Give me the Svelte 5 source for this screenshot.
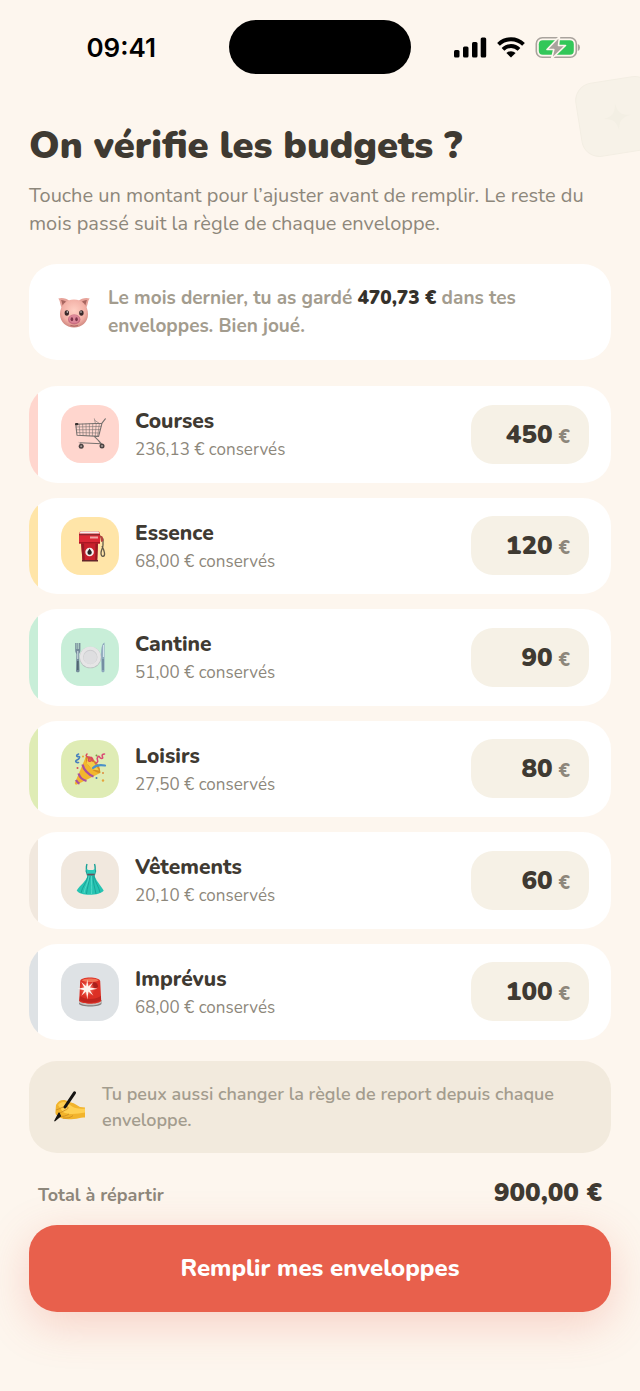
<script>
  const envelopes = [
    { id: "courses", name: "Courses", kept: "236,13", color: "#ffd6ce" },
    { id: "essence", name: "Essence", kept: "68,00", color: "#ffe5a8" },
    { id: "cantine", name: "Cantine", kept: "51,00", color: "#c8eed8" },
    { id: "loisirs", name: "Loisirs", kept: "27,50", color: "#dfecb5" },
    { id: "vetements", name: "Vêtements", kept: "20,10", color: "#f1e8de" },
    { id: "imprevus", name: "Imprévus", kept: "68,00", color: "#dee2e5" },
  ];

  let budgets = $state({
    courses: "450",
    essence: "120",
    cantine: "90",
    loisirs: "80",
    vetements: "60",
    imprevus: "100",
  });

  let total = $derived(
    Object.values(budgets)
      .reduce((sum, b) => sum + (parseFloat(b.replace(",", ".")) || 0), 0)
      .toFixed(2)
      .replace(".", ",")
  );
</script>

{#snippet icon(id)}
  <svg class="emoji" viewBox="0 0 32 32" aria-hidden="true">
    {#if id === "courses"}
      <g fill="none" stroke="#77716f" stroke-linecap="round" stroke-linejoin="round">
        <path stroke-width="1.1" d="M31.3.8 28 5.2 24.6 18.4 3 17.2 1.8 6.2 28 5.2M20 18.2l4.6 4.4 2.8 3.2-21-1" />
        <path stroke-width=".6" d="M2 9l25-.6M2.3 11.8l24-.2M2.7 14.6l23 .4M5.2 6.2l.8 11M8.6 6.1l.5 11.2M12 6l.2 11.5M15.4 5.8v11.8M18.8 5.7l-.4 12M22.2 5.6l-.9 12.5M25.4 5.4l-1.8 12.8M20.4.8l1 4.8M21 2.5l4.5 3M5 24.6l3 2M25 23.5l2 3" />
      </g>
      <rect x="1" y="5" width="3.4" height="2.2" rx="1" fill="#37312f" />
      <circle cx="7.2" cy="28.2" r="2.5" fill="#4c4443" />
      <circle cx="28" cy="28" r="2.5" fill="#4c4443" />
      <circle cx="7.2" cy="28.2" r="1" fill="#a79b98" />
      <circle cx="28" cy="28" r="1" fill="#a79b98" />
    {:else if id === "essence"}
      <path d="M26 6l3 3v6c0 3-2 5-2 8 0 5 4 4 3.5 0-.4-3-1.5-5-2.5-7" fill="none" stroke="#625a49" stroke-width="1.3" />
      <path d="M26 5.5l2.5 1 1 4.5-2.5 1z" fill="#b8413d" />
      <path d="M7 12h17l-.8 19H8.5z" fill="#c9202c" />
      <path d="M7 12h3l.8 19H8.5zM21.5 12H24l-.8 19h-2z" fill="#981824" />
      <path d="M5 4l1-2.5h19L26 4v9.5H5z" fill="#dc2836" />
      <path d="M5.5 3.5L6.5 1.5h18l1 2z" fill="#f2eeee" />
      <path d="M5 4h21v1.3H5z" fill="#8b2830" />
      <path d="M16 6.5h8v2h-8z" fill="#f1a5a6" />
      <path d="M5 12h21v1.5H5z" fill="#a91722" />
      <circle cx="15.6" cy="22" r="4.3" fill="#f5efef" />
      <path d="M15.6 18.5c1 1.700 2.200 2.700 2.200 4.100a2.200 2.200 0 0 1-4.400 0c0-1.400 1.200-2.400 2.200-4.100z" fill="#252324" />
      <path d="M8 30h16v1.5H8z" fill="#64242a" />
    {:else if id === "cantine"}
      <path d="M1.2 2v7.5c0 2 1.200 2.500 1.200 4L2 30c0 1.800 3.600 1.800 3.600 0l-.5-16.500c0-1.500 1.300-2 1.300-4V2" fill="#758b9a" />
      <path d="M2.9 2v6M4.6 2v6" stroke="#c8eed8" stroke-width=".7" />
      <path d="M3.8 10v8" stroke="#d8e5ea" stroke-width="1" />
      <path d="M3.8 20v9" stroke="#506570" stroke-width="1.6" />
      <path d="M30.5 1.5c-3 1.500-3.500 7-3.300 15l.3 13.500c0 1.700 3 1.700 3 0z" fill="#8ca6bb" />
      <path d="M29.4 4v12" stroke="#dce9f3" stroke-width="1" />
      <path d="M29 18v11" stroke="#647f92" stroke-width="1.2" />
      <circle cx="16.3" cy="16.5" r="10.8" fill="#b9c1c0" />
      <circle cx="16.3" cy="16" r="10.5" fill="#e6e5e6" />
      <circle cx="16.3" cy="16" r="7.2" fill="#cccccf" />
      <circle cx="16.3" cy="16.4" r="6.7" fill="#dedee0" />
    {:else if id === "loisirs"}
      <path d="M12 3.5c7 .5 15 9 14.2 16.5L3 31.5c-1.5.6-2.5-.6-2-2z" fill="#f2b62e" />
      <path d="M12 3.5c-2 4 5 16 14.2 16.5C27 12.5 19 4 12 3.5z" fill="#d79022" />
      <path d="M13 5.5l7 4 5 8-7-1-5-6z" fill="#f3cb48" />
      <path d="M8.5 11.5c1 5 6 10.500 11 12M4.500 20.500c1.200 3.500 4 6.500 8 7.500M2 27c.8 1.500 2 3 3.500 3.600" fill="none" stroke="#a94f9e" stroke-width="2.3" />
      <g fill="none" stroke-width="1.6" stroke-linecap="round">
        <path d="M4.5 1c-3 1-2 3 0 2.500S5.500 6 3 7s-1 3 1.500 2.500" stroke="#477fbd" />
        <path d="M13 1c-2 2 0 3 2 3s-2 3 0 4 3-1 2-3 2 0 2 3" stroke="#d94c5c" />
        <path d="M30.5 1c-2 0-3 1-2 3s-2 2-3 0-3 1-2 3-1 3-2 3" stroke="#da4c74" />
        <path d="M19 15c3-3 7-3.500 12-2.500" stroke="#4b91c9" stroke-width="2.2" />
      </g>
      <circle cx="9" cy="3.5" r="1" fill="#e8a832" />
      <circle cx="3.5" cy="15" r="1" fill="#d4495d" />
      <circle cx="22.5" cy="2.5" r="1" fill="#7c9a44" />
      <circle cx="29" cy="20" r="1" fill="#de8b3f" />
      <circle cx="22.5" cy="25" r="1" fill="#437db7" />
      <circle cx="29" cy="27.5" r="1.2" fill="#e6a43b" />
    {:else if id === "vetements"}
      <path d="M13 0c-1.500 4 0 5-.8 7L13.500 11h6.800l1.200-4c-1-2 .5-3-1-7" fill="none" stroke="#18a096" stroke-width="1.4" />
      <path d="M12.2 4.5c2 2 3 1.500 4.500 1.500s2.500.5 4.600-1.500l-.8 6.500h-7z" fill="#2acbb9" />
      <path d="M13.5 11h7c.8 5 6 10 9.200 15.500-3 5-23 6.500-27 0C6 21 13 17 13.500 11z" fill="#27c4b2" />
      <path d="M14 12c-1 6-6 11-7 17M16 12c-1 7-3 12-3.500 18M19 12c0 7 2 12 3 18M20 12c1 6 5 11 6 16.500" fill="none" stroke="#159b92" stroke-width=".8" />
      <path d="M17.5 12c-.2 7 .5 12 0 18M15 12c-.5 6-4 11-5 17" fill="none" stroke="#5bddcd" stroke-width=".8" />
      <path d="M13.2 9.7h7.4v1.7h-7.4z" fill="#6a5159" />
    {:else if id === "imprevus"}
      <defs>
        <radialGradient id="glow">
          <stop offset="0" stop-color="#ffe3d8" />
          <stop offset="1" stop-color="#f0523f" stop-opacity="0" />
        </radialGradient>
      </defs>
      <path d="M5 24v3.5c0 4 22.5 4 22.5 0V24z" fill="#827e7d" />
      <path d="M5 25v1.5c4 3.800 18.500 3.800 22.500 0V25z" fill="#c8c1be" />
      <path d="M6.2 5c0-4.700 19.500-4.700 20 0l1 20c-3.500 3.700-18.500 3.700-22 0z" fill="#dc3025" />
      <path d="M8 4.5c1-2.700 15.500-2.700 16.500 0-4 2-12 2-16.500 0z" fill="#f17558" />
      <path d="M18 7c4-2 6 1 6 4l-4 2z" fill="#a8201c" />
      <path d="M6 20c5 4 15 4 21 0v4c-6 3.500-16 3.500-21.500 0z" fill="#bf241e" />
      <circle cx="13.3" cy="13" r="8" fill="url(#glow)" />
      <path d="M13.3 3.5l1 7 5-4.500-3.400 5.600 7.600 1.200-7.600 1.500 3.500 5.500-5-4.300-1.100 8-1.300-8-4.700 4.300 3-5.500-6.800-1.500 6.800-1.300-3-5.500 4.800 4.300z" fill="#fff4ed" />
    {/if}
  </svg>
{/snippet}

<div class="screen">
  <div class="deco" aria-hidden="true">
    <svg viewBox="0 0 24 24"><path d="M12 1c1 7 3 10 11 11-8 1-10 4-11 11-1-7-3-10-11-11 8-1 10-4 11-11z" fill="#f3efe4" /></svg>
  </div>

  <div class="status-bar">
    <span class="time">09:41</span>
    <div class="island"></div>
    <div class="status-icons">
      <svg width="33" height="21" viewBox="0 0 33 21" aria-hidden="true">
        <rect x="0" y="13" width="5.5" height="7.5" rx="1.5" />
        <rect x="9" y="9.5" width="5.5" height="11" rx="1.5" />
        <rect x="18" y="5" width="5.5" height="15.5" rx="1.5" />
        <rect x="26.7" y="0.5" width="5.5" height="20" rx="1.5" />
      </svg>
      <svg width="28" height="21" viewBox="0 0 28 21" aria-hidden="true">
        <path d="M1.5 7.3a18 18 0 0 1 25 0M6 12.3a11.5 11.5 0 0 1 16 0" fill="none" stroke="#000" stroke-width="3.9" />
        <path d="M14 20.5l-4.6-4.4a6.5 6.5 0 0 1 9.2 0z" />
      </svg>
      <svg width="45" height="23" viewBox="0 0 45 23" aria-hidden="true">
        <rect x="1.3" y="1.8" width="40" height="19.4" rx="6" fill="none" stroke="#a9a39d" stroke-width="1.6" />
        <path d="M42.8 8v7q2.200-.8 2.200-3.500T42.800 8z" fill="#a9a39d" />
        <rect x="3.8" y="4.3" width="35" height="14.4" rx="4" fill="#33c759" />
        <path d="M24.5 .5L12 13.500h6.800L16.500 23 30.500 9.500h-7z" fill="#a9a39d" stroke="#fdf6ee" stroke-width="1.6" stroke-linejoin="round" />
      </svg>
    </div>
  </div>

  <main>
    <h1>On vérifie les budgets ?</h1>
    <p class="intro">Touche un montant pour l’ajuster avant de remplir. Le reste du mois passé suit la règle de chaque enveloppe.</p>

    <div class="saved">
      <svg class="emoji" viewBox="0 0 32 32" aria-hidden="true">
        <defs>
          <radialGradient id="pig" cx=".5" cy=".4" r=".6">
            <stop offset="0" stop-color="#ffd0c4" />
            <stop offset=".7" stop-color="#f2b0a6" />
            <stop offset="1" stop-color="#cf877f" />
          </radialGradient>
        </defs>
        <path d="M.3 2.5C4 1 9 2.500 11.500 5L4 12C1.800 9 2.500 5 .3 2.500zM31.700 2.500C28 1 23 2.500 20.500 5l7.500 7c2.200-3 1.500-7 3.700-9.500z" fill="#e7a39a" />
        <path d="M3 4c2.5 0 4.500 1 6 2.500L5 10C4 8 4 6 3 4zM29 4c-2.500 0-4.500 1-6 2.500L27 10c1-2 1-4 2-6z" fill="#a86660" />
        <path d="M16 3.5c8 0 14 6 14 14.500 0 8-6 13.500-14 13.500S2 26 2 18C2 9.500 8 3.500 16 3.500z" fill="url(#pig)" />
        <ellipse cx="8.8" cy="17" rx="2.2" ry="2.8" fill="#39292a" />
        <ellipse cx="23.4" cy="17" rx="2.2" ry="2.8" fill="#39292a" />
        <circle cx="9.3" cy="16" r=".7" fill="#fff" />
        <circle cx="23" cy="16" r=".7" fill="#fff" />
        <ellipse cx="16.2" cy="23.5" rx="6.2" ry="5" fill="#ca6c80" />
        <ellipse cx="16.2" cy="22.8" rx="5.3" ry="4" fill="#dc8798" />
        <ellipse cx="13.9" cy="23.2" rx="1.3" ry="2" fill="#7d344a" />
        <ellipse cx="18.5" cy="23.2" rx="1.3" ry="2" fill="#7d344a" />
        <path d="M12.5 29.5q3.7 1.4 7.4 0" fill="none" stroke="#aa6260" />
      </svg>
      <p>Le mois dernier, tu as gardé <strong>470,73 €</strong> dans tes enveloppes. Bien joué.</p>
    </div>

    <ul class="envelopes">
      {#each envelopes as env (env.id)}
        <li class="envelope" style:--tint={env.color}>
          <span class="tile">{@render icon(env.id)}</span>
          <div class="details">
            <h2>{env.name}</h2>
            <p>{env.kept} € conservés</p>
          </div>
          <label class="amount">
            <input type="text" inputmode="decimal" aria-label="Budget {env.name}" bind:value={budgets[env.id]} />
            <span>€</span>
          </label>
        </li>
      {/each}
    </ul>

    <div class="hint">
      <svg class="emoji" viewBox="0 0 32 32" aria-hidden="true">
        <path d="M2 14c2-4 6-6 10-4.500l5 2c4 .5 6 3 9 4.500l5 .5v10c-4-.5-7 1-11 1.500-6 .5-12 .5-16-2.500-2-1.500-3-3-2.500-5.500z" fill="#f2b42c" />
        <path d="M4 14c3-3.500 6-3.500 9-2l6 4c3 1.500 7 2 12 1.500v4c-7 1-16 3-22-.5z" fill="#ffd052" />
        <path d="M2 19c4-1 7-4 11-3.500 2 .5 1 3-1.500 3.500L5 22.500M5 25c4 1 7 0 10-2M9 27c4 .5 8-.5 10-2.500" fill="none" stroke="#cf8e22" stroke-width=".9" />
        <path d="M20.5 1.8L11 16" stroke="#171512" stroke-width="3" stroke-linecap="round" />
        <path d="M5 22L.8 29.800 6.500 25z" fill="#171512" stroke="#171512" stroke-width="1.2" stroke-linejoin="round" />
      </svg>
      <p>Tu peux aussi changer la règle de report depuis chaque enveloppe.</p>
    </div>
  </main>

  <footer>
    <div class="total">
      <span>Total à répartir</span>
      <strong>{total} €</strong>
    </div>
    <button type="button">Remplir mes enveloppes</button>
  </footer>
</div>

<style>
  :global(body) {
    background: #fdf6ee;
  }

  .screen {
    position: relative;
    overflow: hidden;
    min-height: 100vh;
    box-sizing: border-box;
    padding-top: 20px;
    color: #3f3a32;
    font-family: Nunito, Lato, sans-serif;
  }

  h1, h2, p, ul {
    margin: 0;
    padding: 0;
  }

  .deco {
    position: absolute;
    top: 79px;
    right: -16px;
    width: 76px;
    height: 73px;
    display: grid;
    place-items: center;
    border: 1px solid #f3eee3;
    border-radius: 18px;
    background: #f7f2e8;
    transform: rotate(-9deg);
  }

  .deco svg {
    width: 30px;
  }

  .status-bar {
    display: grid;
    grid-template-columns: 1fr 182px 1fr;
    align-items: center;
  }

  .time {
    justify-self: end;
    margin-right: 73px;
    color: #000;
    font: 600 26px Inter, sans-serif;
  }

  .island {
    height: 54px;
    border-radius: 27px;
    background: #000;
  }

  .status-icons {
    display: flex;
    align-items: center;
    gap: 10px;
    margin-left: 43px;
  }

  main {
    padding: 48px 29px 0;
  }

  h1 {
    font-size: 38px;
    font-weight: 900;
    line-height: 48px;
  }

  .intro {
    margin-top: 12px;
    color: #8d877b;
    font-size: 20px;
    line-height: 28px;
  }

  .emoji {
    flex: none;
    width: 32px;
    height: 32px;
    overflow: visible;
  }

  .saved {
    display: flex;
    align-items: center;
    gap: 18px;
    margin-top: 26px;
    padding: 20px 29px;
    border-radius: 28px;
    background: #fff;
    color: #a39c8e;
    font-size: 19px;
    font-weight: 700;
    line-height: 28px;
  }

  .saved strong {
    color: #35312b;
    font-weight: 900;
  }

  .envelopes {
    display: grid;
    grid-auto-rows: 1fr;
    gap: 15px;
    min-height: 654px;
    margin-top: 26px;
    list-style: none;
  }

  .envelope {
    display: flex;
    align-items: center;
    gap: 16px;
    padding: 0 22px 0 32px;
    border-radius: 28px;
    background: linear-gradient(to right, var(--tint) 9px, #fff 9px);
  }

  .tile {
    display: grid;
    place-items: center;
    width: 58px;
    height: 58px;
    border-radius: 20px;
    background: var(--tint);
  }

  .details {
    flex: 1;
    padding-top: 2px;
  }

  h2 {
    font-size: 21px;
    font-weight: 800;
    line-height: 30px;
  }

  .details p {
    color: #8d877b;
    font-size: 17px;
    line-height: 28px;
  }

  .amount {
    display: flex;
    align-items: baseline;
    gap: 6px;
    box-sizing: border-box;
    width: 118px;
    height: 59px;
    padding: 0 19px;
    border-radius: 22px;
    background: #f6f1e6;
    color: #8d877b;
    font-size: 19px;
    font-weight: 800;
    line-height: 60px;
  }

  .amount input {
    flex: 1;
    min-width: 0;
    padding: 0;
    border: 0;
    outline: 0;
    background: none;
    color: #3f3a32;
    font: inherit;
    font-size: 26px;
    font-weight: 900;
    text-align: right;
  }

  .hint {
    display: flex;
    align-items: center;
    gap: 16px;
    margin-top: 21px;
    padding: 20px 25px;
    border-radius: 28px;
    background: #f2eadd;
    color: #a39c8e;
    font-size: 18px;
    font-weight: 600;
    line-height: 26px;
  }

  footer {
    padding: 22px 29px 79px;
  }

  .total {
    display: flex;
    align-items: baseline;
    justify-content: space-between;
    padding: 0 9px;
    color: #8d877b;
    font-size: 18px;
    font-weight: 700;
    line-height: 36px;
  }

  .total strong {
    color: #3f3a32;
    font-size: 26px;
    font-weight: 900;
  }

  button {
    width: 100%;
    margin-top: 12px;
    padding: 27px;
    border: 0;
    border-radius: 28px;
    background: #e8604c;
    box-shadow: 0 12px 44px rgba(232, 96, 76, 0.25);
    color: #fff;
    font: inherit;
    font-size: 24px;
    font-weight: 800;
    line-height: 33px;
  }
</style>
